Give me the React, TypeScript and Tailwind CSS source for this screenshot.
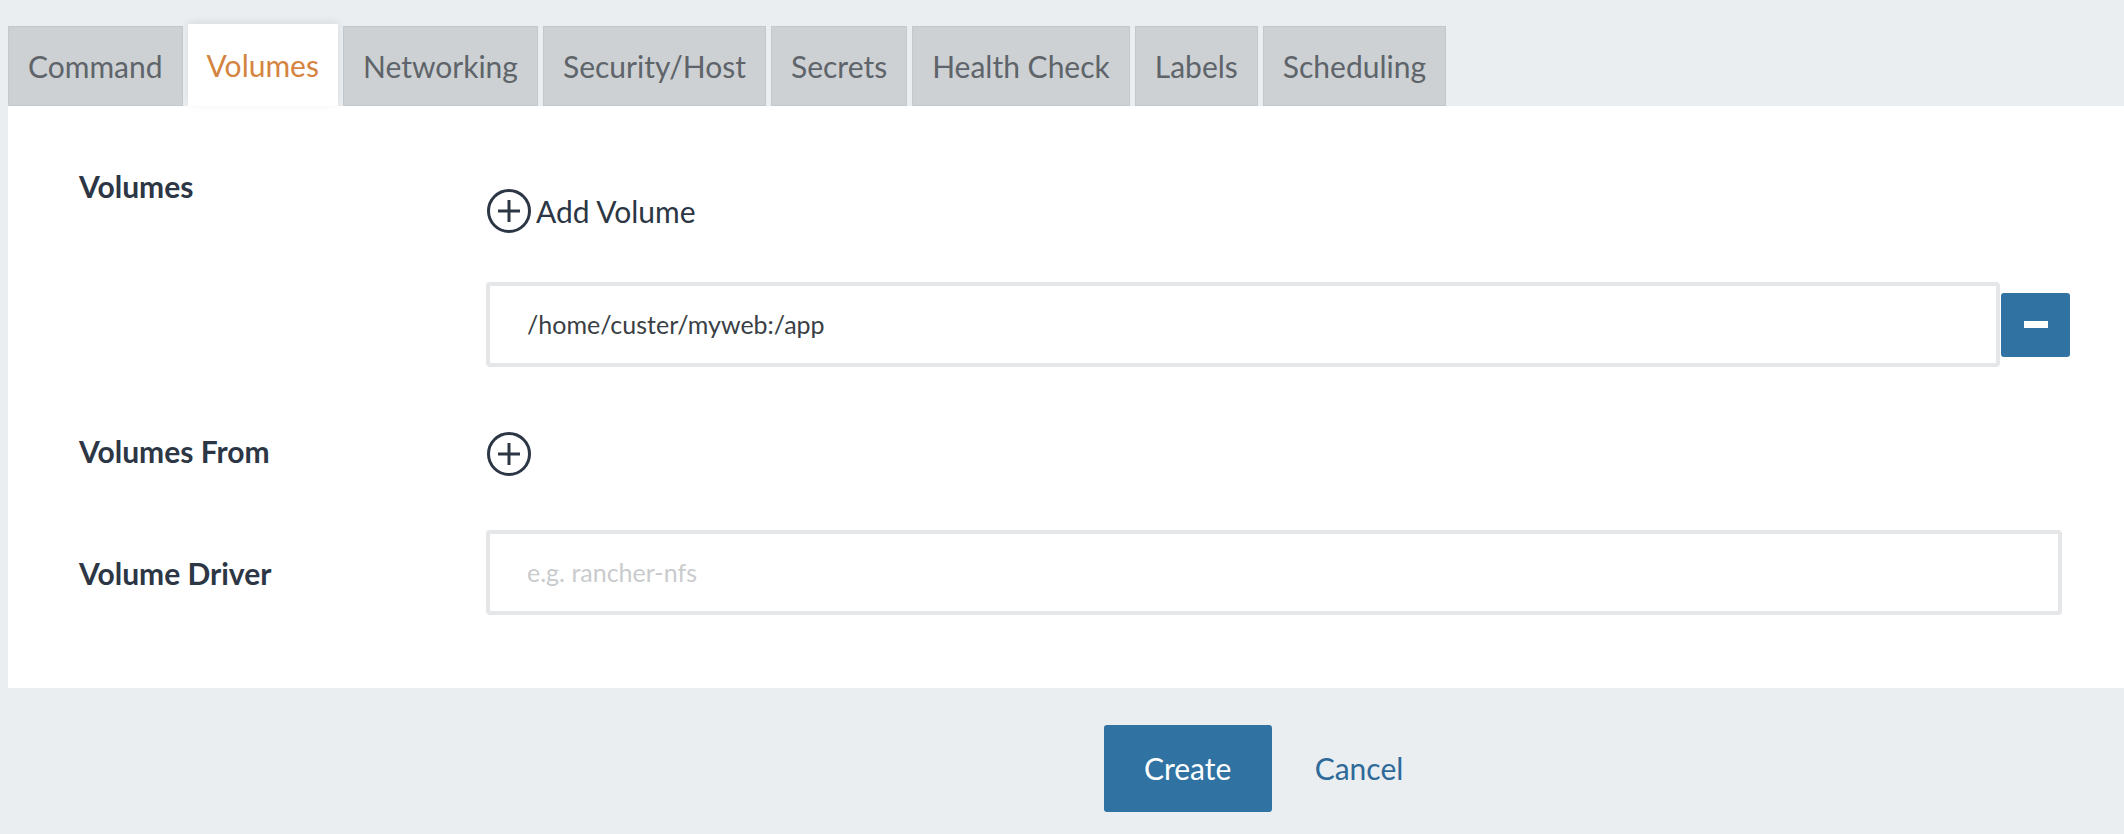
import React from "react";

const tabs = ["Command", "Volumes", "Networking", "Security/Host", "Secrets", "Health Check", "Labels", "Scheduling"];

function PlusCircle() {
  return (
    <svg width="46" height="46" viewBox="0 0 46 46" fill="none" stroke="#2c3645" strokeWidth="3">
      <circle cx="23" cy="23" r="20.5" />
      <line x1="12" y1="23" x2="34" y2="23" />
      <line x1="23" y1="12" x2="23" y2="34" />
    </svg>
  );
}

export default function App() {
  return (
    <div className="min-h-[834px] w-full bg-[#ebeef0] pt-[24px] pl-[8px] font-['Lato',sans-serif]">
      <div className="flex items-end gap-[5px]">
        {tabs.map((t) =>
          t === "Volumes" ? (
            <div
              key={t}
              className="relative z-10 flex h-[82px] items-center bg-white px-[19px] text-[30px] text-[#d4843f] shadow-[0_-2px_8px_rgba(0,0,0,0.08)]"
            >
              {t}
            </div>
          ) : (
            <div
              key={t}
              className="flex h-[80px] items-center border border-[#c4c8cb] bg-[#cdd1d4] px-[19px] text-[30px] text-[#5e6469]"
            >
              {t}
            </div>
          )
        )}
      </div>
      <div className="bg-white pl-[71px] pr-[54px] pt-[60px] pb-[73px]">
        <div className="flex">
          <div className="w-[407px] text-[30px] font-bold leading-[40px] text-[#2c3645]">Volumes</div>
          <div className="flex flex-1 flex-col">
            <div className="mt-[22px] flex items-center gap-[4px] text-[30px] text-[#2c3645]">
              <PlusCircle />
              <span>Add Volume</span>
            </div>
            <div className="mt-[48px] flex items-center">
              <div className="flex h-[85px] flex-1 items-center rounded-[4px] border-[4px] border-[#e5e6e8] pl-[37px] text-[25px] text-[#3a3f46]">
                /home/custer/myweb:/app
              </div>
              <button className="ml-[1px] flex h-[64px] w-[69px] items-center justify-center rounded-[3px] bg-[#3073a3]">
                <span className="block h-[7px] w-[24px] bg-white" />
              </button>
            </div>
          </div>
        </div>
        <div className="mt-[64px] flex items-center">
          <div className="mb-[6px] w-[407px] text-[30px] font-bold leading-[40px] text-[#2c3645]">Volumes From</div>
          <PlusCircle />
        </div>
        <div className="mt-[53px] flex items-center">
          <div className="w-[407px] text-[30px] font-bold leading-[40px] text-[#2c3645]">Volume Driver</div>
          <div className="mr-[8px] flex h-[85px] flex-1 items-center rounded-[4px] border-[4px] border-[#e5e6e8] pl-[37px] text-[25px] text-[#c9cbcd]">
            e.g. rancher-nfs
          </div>
        </div>
      </div>
      <div className="flex pt-[37px]">
        <div className="w-[478px]" />
        <div className="flex flex-1 justify-center pr-[60px]">
          <div className="flex items-center">
            <button className="h-[87px] w-[168px] rounded-[3px] bg-[#3073a3] text-[30px] text-white">Create</button>
            <button className="px-[43px] text-[30px] text-[#2e6a99]">Cancel</button>
          </div>
        </div>
      </div>
    </div>
  );
}
